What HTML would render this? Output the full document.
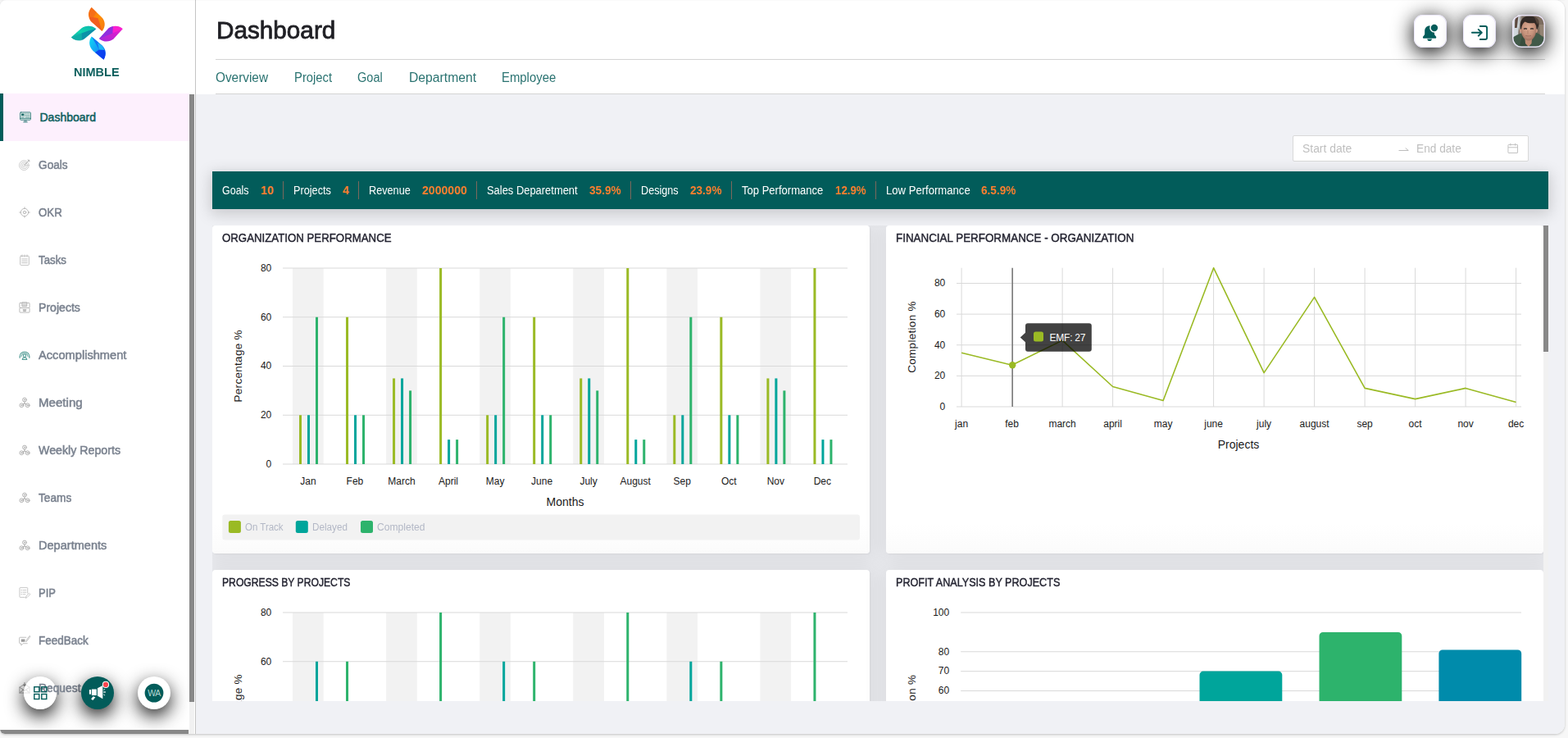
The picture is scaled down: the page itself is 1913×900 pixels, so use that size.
<!DOCTYPE html>
<html lang="en"><head><meta charset="utf-8"><title>Dashboard</title>
<style>
html,body{margin:0;padding:0}
body{width:1913px;height:900px;overflow:hidden;background:#f7f7f7;font-family:"Liberation Sans",sans-serif;position:relative}
.app{position:absolute;left:0;top:0;width:1909px;height:895px;border-radius:8px 12px 12px 6px;overflow:hidden;background:#f0f1f5;}
.frame{position:absolute;left:0;top:0;width:1909px;height:895px;border-radius:8px 12px 12px 6px;box-shadow:0 1px 3px rgba(0,0,0,.22);background:#fff}
.t{position:absolute;white-space:nowrap;line-height:20px;margin:0;padding:0;transform-origin:0 50%;text-decoration:none;display:block}
.abs{position:absolute}
.side{position:absolute;left:0;top:0;width:238px;height:895px;background:#fff;border-right:1px solid #c4c4c4}
.head{position:absolute;left:239px;top:0;width:1670px;height:115px;background:#fff}
.hl{position:absolute;left:24px;width:1622px;height:1px;background:#d4d4d4}
.ibtn{border:0;padding:0;margin:0;display:block;position:absolute;top:18px;width:40px;height:40px;border-radius:11px;background:#fff;box-shadow:0 5px 24px 1px rgba(0,0,0,.95),0 0 0 1px #ebe7fa inset;}
.fab{border:0;padding:0;margin:0;display:block;position:absolute;top:825px;width:40px;height:40px;border-radius:50%;box-shadow:0 8px 22px 0 rgba(0,0,0,.9);}
.stat{position:absolute;left:259px;top:209px;width:1630px;height:46px;background:#025c5a;box-shadow:0 4px 18px 2px rgba(0,0,0,.17)}
.sep{position:absolute;top:12px;width:1px;height:22px;background:#7c685c}
.date{position:absolute;left:1577px;top:165px;width:286px;height:30px;border:1px solid #d9d9d9;border-radius:2px;background:#fff}
.scroll{position:absolute;left:259px;top:275px;width:1630px;height:580px;overflow:hidden}
.card{position:absolute;width:802px;height:400px;background:#fff;border-radius:4px;box-shadow:1px 1px 2px rgba(0,0,0,.05),2px 2px 22px 9px rgba(0,0,0,.07)}
.card.r1{background:linear-gradient(to bottom,#fff 0,#fff 365px,#fbfbfb 400px)}
svg{position:absolute;overflow:visible}
svg text{font-family:"Liberation Sans",sans-serif}
</style></head>
<body>
<div class="frame"></div>
<div class="app">
  <header class="head">
    <div class="hl" style="top:72px"></div>
    <div class="hl" style="top:114px"></div>
  </header>
  <h1 class="t" style="left:264.30px;top:27px;font-size:29.5px;font-weight:400;color:#1f1f24;transform:scaleX(1.0067);-webkit-text-stroke:0.8px #1f1f24;">Dashboard</h1>
  <nav>
  <a class="t" style="left:262.80px;top:85px;font-size:16px;font-weight:400;color:#2a7371;transform:scaleX(0.9597);">Overview</a>
<a class="t" style="left:358.60px;top:85px;font-size:16px;font-weight:400;color:#2a7371;transform:scaleX(0.9258);">Project</a>
<a class="t" style="left:436.20px;top:85px;font-size:16px;font-weight:400;color:#2a7371;transform:scaleX(0.9084);">Goal</a>
<a class="t" style="left:498.70px;top:85px;font-size:16px;font-weight:400;color:#2a7371;transform:scaleX(0.9821);">Department</a>
<a class="t" style="left:611.80px;top:85px;font-size:16px;font-weight:400;color:#2a7371;transform:scaleX(0.9303);">Employee</a>
  </nav>
  <button class="ibtn" style="left:1725px"><svg width="40" height="40" viewBox="0 0 40 40" style="left:0;top:0">
<path d="M19.1 13.500c-3.500 0-5.900 2.600-5.900 6.100v3.300c0 1.200-.6 2.100-1.500 3.100-.6.700-1 1.200-.7 1.900.2.600.8.800 1.500.8h13.200c.7 0 1.300-.2 1.500-.8.300-.7-.1-1.200-.7-1.900-.9-1-1.500-1.900-1.500-3.100v-3.300c0-3.500-2.400-6.100-5.900-6.100z" fill="#025c5a"/>
<path d="M16.200 29.400h5.800c-.2 1.600-1.400 2.600-2.900 2.600s-2.700-1-2.900-2.600z" fill="#025c5a"/>
<circle cx="24.900" cy="16" r="5.700" fill="#fff"/>
<circle cx="24.900" cy="16" r="4.200" fill="#025c5a"/>
</svg></button>
  <button class="ibtn" style="left:1785px"><svg width="40" height="40" viewBox="0 0 40 40" style="left:0;top:0" fill="none" stroke="#025c5a" stroke-width="1.900" stroke-linejoin="round">
<path d="M10.900 21.800h11.600M18.700 17.900l4.100 3.900-4.100 3.900" stroke-linecap="round"/>
<path d="M20.100 14h7a2 2 0 0 1 2 2v12a2 2 0 0 1-2 2h-7"/>
</svg></button>
  <div class="ibtn" style="left:1845px;box-shadow:0 5px 24px 1px rgba(0,0,0,.95)"><svg width="40" height="40" viewBox="0 0 40 40" style="left:0;top:0">
<defs>
<linearGradient id="avbg" x1="0" y1="0" x2="1" y2="0"><stop offset="0" stop-color="#d9dfe4"/><stop offset="0.200" stop-color="#c9cfd4"/><stop offset="0.300" stop-color="#7d6f64"/><stop offset="0.750" stop-color="#756558"/><stop offset="1" stop-color="#8f7f71"/></linearGradient>
<radialGradient id="avface" cx="0.480" cy="0.400" r="0.650"><stop offset="0" stop-color="#dcaa92"/><stop offset="0.600" stop-color="#c4917a"/><stop offset="1" stop-color="#97695a"/></radialGradient>
<filter id="avb" x="-20%" y="-20%" width="140%" height="140%"><feGaussianBlur stdDeviation="0.500"/></filter>
<clipPath id="avc"><rect width="40" height="40" rx="11"/></clipPath>
</defs>
<g clip-path="url(#avc)">
<rect width="40" height="40" fill="url(#avbg)"/>
<g filter="url(#avb)">
<path d="M3.500 1h4l-1.800 15h-2.700z" fill="#5d4a40"/>
<path d="M8 14l2 12-3 2z" fill="#7a6a5e"/>
<path d="M30 4h12v26l-8-4z" fill="#7d6d60"/>
<path d="M33 12h7v14h-6z" fill="#938373"/>
<path d="M-2 42V29l8-4.500 6.500-2.500 4 9 3.500 6 4-6 4-9.500 4 1.500 9 6.500V42z" fill="#435a48"/>
<path d="M12.500 24l3 8 4.500 6.500-4 3.500H8z" fill="#384d3d"/>
<path d="M15.500 29h8.500l-.5 6-3.700 4-3.800-4z" fill="#c08d75"/>
<path d="M11 17.500c-1.500-.8-2.300 0-2 1.700.3 1.800 1.200 3 2.500 3zM29 17.500c1.500-.8 2.300 0 2 1.700-.3 1.800-1.200 3-2.500 3z" fill="#c99680"/>
<path d="M11 13c0-4.500 3.500-7 9-7s9 2.500 9 7v7c0 6-4.500 11.500-9 11.500S11 26 11 20z" fill="url(#avface)"/>
<path d="M9.800 17.500C8.500 8 12 1.500 20.500 1.500c8 0 13.500 4 11.500 12.500l-2 4.500c-.3-4-1.200-6.500-3-8.500-4 .8-8.500.3-11.500-1.500-2.500 2-4 4.500-4.500 9z" fill="#332925"/>
<path d="M27 3c3 .5 5.500 3 5.500 6l-2 3z" fill="#54443a"/>
<path d="M14 17.300c1.200-.6 2.800-.6 4 0M22 17.300c1.200-.6 2.800-.6 4 0" stroke="#3f3430" stroke-width="1.400" fill="none"/>
<path d="M19 19v4.500" stroke="#b88670" stroke-width="1.200"/>
<path d="M16.300 25.500c2.200.6 4.500.6 6.700 0" stroke="#9c6a5c" stroke-width="1" fill="none"/>
</g>
</g>
<rect x="0.750" y="0.750" width="38.500" height="38.500" rx="10.500" fill="none" stroke="#e9e4f6" stroke-width="1.500"/>
</svg></div>

  <div class="date"><svg width="14" height="10" viewBox="0 0 14 10" style="left:128px;top:10.500px" fill="none" stroke="#bdbdbd" stroke-width="1">
<path d="M0.500 6.500h11.800l-3.600-3"/></svg><svg width="13.500" height="13.500" viewBox="0 0 14 14" style="left:261.200px;top:7.800px" fill="none" stroke="#bfbfbf" stroke-width="1">
<rect x="1" y="2.500" width="12" height="10.500" rx="0.500"/><path d="M1 6h12M4 0.800v3M10 0.800v3"/></svg><span class="t" style="left:10.80px;top:5px;font-size:14px;font-weight:400;color:#bfbfbf;transform:scaleX(0.9934);">Start date</span>
<span class="t" style="left:150.00px;top:5px;font-size:14px;font-weight:400;color:#bfbfbf;transform:scaleX(0.9775);">End date</span></div>
  <section class="stat">
    <div class="sep" style="left:86px"></div><div class="sep" style="left:178px"></div><div class="sep" style="left:322px"></div><div class="sep" style="left:510px"></div><div class="sep" style="left:633px"></div><div class="sep" style="left:809px"></div>
    <span class="t" style="left:11.90px;top:13px;font-size:14px;font-weight:400;color:#ffffff;transform:scaleX(0.8912);">Goals</span>
<b class="t" style="left:59.10px;top:13px;font-size:14px;font-weight:700;color:#fb7f2e;">10</b>
<span class="t" style="left:98.60px;top:13px;font-size:14px;font-weight:400;color:#ffffff;transform:scaleX(0.9075);">Projects</span>
<b class="t" style="left:159.10px;top:13px;font-size:14px;font-weight:700;color:#fb7f2e;">4</b>
<span class="t" style="left:191.00px;top:13px;font-size:14px;font-weight:400;color:#ffffff;transform:scaleX(0.9064);">Revenue</span>
<b class="t" style="left:255.90px;top:13px;font-size:14px;font-weight:700;color:#fb7f2e;transform:scaleX(1.0071);">2000000</b>
<span class="t" style="left:335.10px;top:13px;font-size:14px;font-weight:400;color:#ffffff;transform:scaleX(0.9229);">Sales Deparetment</span>
<b class="t" style="left:459.50px;top:13px;font-size:14px;font-weight:700;color:#fb7f2e;transform:scaleX(0.9747);">35.9%</b>
<span class="t" style="left:522.80px;top:13px;font-size:14px;font-weight:400;color:#ffffff;transform:scaleX(0.9033);">Designs</span>
<b class="t" style="left:582.50px;top:13px;font-size:14px;font-weight:700;color:#fb7f2e;transform:scaleX(0.9697);">23.9%</b>
<span class="t" style="left:645.50px;top:13px;font-size:14px;font-weight:400;color:#ffffff;transform:scaleX(0.9314);">Top Performance</span>
<b class="t" style="left:759.80px;top:13px;font-size:14px;font-weight:700;color:#fb7f2e;transform:scaleX(0.9495);">12.9%</b>
<span class="t" style="left:821.70px;top:13px;font-size:14px;font-weight:400;color:#ffffff;transform:scaleX(0.9360);">Low Performance</span>
<b class="t" style="left:938.10px;top:13px;font-size:14px;font-weight:700;color:#fb7f2e;transform:scaleX(0.9703);">6.5.9%</b>
  </section>

  <main class="scroll">
    <section class="card r1" style="left:0;top:0"></section>
    <section class="card r1" style="left:822px;top:0"></section>
    <section class="card" style="left:0;top:420px"></section>
    <section class="card" style="left:822px;top:420px"></section>
    <svg width="1624" height="820" viewBox="0 0 1624 820" style="left:0;top:0">
<rect x="98.00" y="52" width="37.670" height="239" fill="#f2f2f2"/>
<rect x="212.08" y="52" width="37.670" height="239" fill="#f2f2f2"/>
<rect x="326.16" y="52" width="37.670" height="239" fill="#f2f2f2"/>
<rect x="440.24" y="52" width="37.670" height="239" fill="#f2f2f2"/>
<rect x="554.32" y="52" width="37.670" height="239" fill="#f2f2f2"/>
<rect x="668.40" y="52" width="37.670" height="239" fill="#f2f2f2"/>
<path d="M86 291.00H775" stroke="#d9d9d9" stroke-width="1" />
<text x="72.3" y="294.8" text-anchor="end" font-size="12" fill="#1a1a1a">0</text>
<path d="M86 231.25H775" stroke="#d9d9d9" stroke-width="1" />
<text x="72.3" y="235.1" text-anchor="end" font-size="12" fill="#1a1a1a">20</text>
<path d="M86 171.50H775" stroke="#d9d9d9" stroke-width="1" />
<text x="72.3" y="175.3" text-anchor="end" font-size="12" fill="#1a1a1a">40</text>
<path d="M86 111.75H775" stroke="#d9d9d9" stroke-width="1" />
<text x="72.3" y="115.5" text-anchor="end" font-size="12" fill="#1a1a1a">60</text>
<path d="M86 52.00H775" stroke="#d9d9d9" stroke-width="1" />
<text x="72.3" y="55.8" text-anchor="end" font-size="12" fill="#1a1a1a">80</text>
<rect x="106.00" y="231.25" width="3" height="59.75" fill="#9aba24"/>
<rect x="116.00" y="231.25" width="3" height="59.75" fill="#00a59b"/>
<rect x="126.00" y="111.75" width="3" height="179.25" fill="#2db36c"/>
<rect x="163.04" y="111.75" width="3" height="179.25" fill="#9aba24"/>
<rect x="173.04" y="231.25" width="3" height="59.75" fill="#00a59b"/>
<rect x="183.04" y="231.25" width="3" height="59.75" fill="#2db36c"/>
<rect x="220.08" y="186.44" width="3" height="104.56" fill="#9aba24"/>
<rect x="230.08" y="186.44" width="3" height="104.56" fill="#00a59b"/>
<rect x="240.08" y="201.38" width="3" height="89.62" fill="#2db36c"/>
<rect x="277.12" y="52.00" width="3" height="239.00" fill="#9aba24"/>
<rect x="287.12" y="261.12" width="3" height="29.88" fill="#00a59b"/>
<rect x="297.12" y="261.12" width="3" height="29.88" fill="#2db36c"/>
<rect x="334.16" y="231.25" width="3" height="59.75" fill="#9aba24"/>
<rect x="344.16" y="231.25" width="3" height="59.75" fill="#00a59b"/>
<rect x="354.16" y="111.75" width="3" height="179.25" fill="#2db36c"/>
<rect x="391.20" y="111.75" width="3" height="179.25" fill="#9aba24"/>
<rect x="401.20" y="231.25" width="3" height="59.75" fill="#00a59b"/>
<rect x="411.20" y="231.25" width="3" height="59.75" fill="#2db36c"/>
<rect x="448.24" y="186.44" width="3" height="104.56" fill="#9aba24"/>
<rect x="458.24" y="186.44" width="3" height="104.56" fill="#00a59b"/>
<rect x="468.24" y="201.38" width="3" height="89.62" fill="#2db36c"/>
<rect x="505.28" y="52.00" width="3" height="239.00" fill="#9aba24"/>
<rect x="515.28" y="261.12" width="3" height="29.88" fill="#00a59b"/>
<rect x="525.28" y="261.12" width="3" height="29.88" fill="#2db36c"/>
<rect x="562.32" y="231.25" width="3" height="59.75" fill="#9aba24"/>
<rect x="572.32" y="231.25" width="3" height="59.75" fill="#00a59b"/>
<rect x="582.32" y="111.75" width="3" height="179.25" fill="#2db36c"/>
<rect x="619.36" y="111.75" width="3" height="179.25" fill="#9aba24"/>
<rect x="629.36" y="231.25" width="3" height="59.75" fill="#00a59b"/>
<rect x="639.36" y="231.25" width="3" height="59.75" fill="#2db36c"/>
<rect x="676.40" y="186.44" width="3" height="104.56" fill="#9aba24"/>
<rect x="686.40" y="186.44" width="3" height="104.56" fill="#00a59b"/>
<rect x="696.40" y="201.38" width="3" height="89.62" fill="#2db36c"/>
<rect x="733.44" y="52.00" width="3" height="239.00" fill="#9aba24"/>
<rect x="743.44" y="261.12" width="3" height="29.88" fill="#00a59b"/>
<rect x="753.44" y="261.12" width="3" height="29.88" fill="#2db36c"/>
<text x="116.9" y="316.3" text-anchor="middle" font-size="12" fill="#1a1a1a">Jan</text>
<text x="173.9" y="316.3" text-anchor="middle" font-size="12" fill="#1a1a1a">Feb</text>
<text x="231" y="316.3" text-anchor="middle" font-size="12" fill="#1a1a1a">March</text>
<text x="288" y="316.3" text-anchor="middle" font-size="12" fill="#1a1a1a">April</text>
<text x="345.1" y="316.3" text-anchor="middle" font-size="12" fill="#1a1a1a">May</text>
<text x="402.1" y="316.3" text-anchor="middle" font-size="12" fill="#1a1a1a">June</text>
<text x="459.1" y="316.3" text-anchor="middle" font-size="12" fill="#1a1a1a">July</text>
<text x="516.2" y="316.3" text-anchor="middle" font-size="12" fill="#1a1a1a">August</text>
<text x="573.2" y="316.3" text-anchor="middle" font-size="12" fill="#1a1a1a">Sep</text>
<text x="630.3" y="316.3" text-anchor="middle" font-size="12" fill="#1a1a1a">Oct</text>
<text x="687.3" y="316.3" text-anchor="middle" font-size="12" fill="#1a1a1a">Nov</text>
<text x="744.3" y="316.3" text-anchor="middle" font-size="12" fill="#1a1a1a">Dec</text>
<text x="430.5" y="341.8" text-anchor="middle" font-size="14" fill="#1a1a1a">Months</text>
<text transform="translate(36.3 171.3) rotate(-90)" text-anchor="middle" font-size="13.500" letter-spacing="0.300" fill="#1a1a1a">Percentage %</text>
<rect x="12.3" y="352.5" width="777.700" height="31" rx="3" fill="#f2f2f2"/>
<rect x="19.9" y="360" width="15" height="15" rx="2.500" fill="#9aba24"/>
<rect x="101.8" y="360" width="15" height="15" rx="2.500" fill="#00a59b"/>
<rect x="181" y="360" width="15" height="15" rx="2.500" fill="#2db36c"/>
<path d="M908 221.00H1597" stroke="#d9d9d9" stroke-width="1"/>
<text x="894.3" y="224.8" text-anchor="end" font-size="12" fill="#1a1a1a">0</text>
<path d="M908 183.38H1597" stroke="#d9d9d9" stroke-width="1"/>
<text x="894.3" y="187.2" text-anchor="end" font-size="12" fill="#1a1a1a">20</text>
<path d="M908 145.76H1597" stroke="#d9d9d9" stroke-width="1"/>
<text x="894.3" y="149.6" text-anchor="end" font-size="12" fill="#1a1a1a">40</text>
<path d="M908 108.14H1597" stroke="#d9d9d9" stroke-width="1"/>
<text x="894.3" y="111.9" text-anchor="end" font-size="12" fill="#1a1a1a">60</text>
<path d="M908 70.52H1597" stroke="#d9d9d9" stroke-width="1"/>
<text x="894.3" y="74.3" text-anchor="end" font-size="12" fill="#1a1a1a">80</text>
<path d="M914.10 51.7V221" stroke="#d9d9d9" stroke-width="1"/>
<text x="914.1" y="246.2" text-anchor="middle" font-size="12" fill="#1a1a1a">jan</text>
<path d="M975.60 51.7V221" stroke="#d9d9d9" stroke-width="1"/>
<text x="975.6" y="246.2" text-anchor="middle" font-size="12" fill="#1a1a1a">feb</text>
<path d="M1037.10 51.7V221" stroke="#d9d9d9" stroke-width="1"/>
<text x="1037.1" y="246.2" text-anchor="middle" font-size="12" fill="#1a1a1a">march</text>
<path d="M1098.60 51.7V221" stroke="#d9d9d9" stroke-width="1"/>
<text x="1098.6" y="246.2" text-anchor="middle" font-size="12" fill="#1a1a1a">april</text>
<path d="M1160.10 51.7V221" stroke="#d9d9d9" stroke-width="1"/>
<text x="1160.1" y="246.2" text-anchor="middle" font-size="12" fill="#1a1a1a">may</text>
<path d="M1221.60 51.7V221" stroke="#d9d9d9" stroke-width="1"/>
<text x="1221.6" y="246.2" text-anchor="middle" font-size="12" fill="#1a1a1a">june</text>
<path d="M1283.10 51.7V221" stroke="#d9d9d9" stroke-width="1"/>
<text x="1283.1" y="246.2" text-anchor="middle" font-size="12" fill="#1a1a1a">july</text>
<path d="M1344.60 51.7V221" stroke="#d9d9d9" stroke-width="1"/>
<text x="1344.6" y="246.2" text-anchor="middle" font-size="12" fill="#1a1a1a">august</text>
<path d="M1406.10 51.7V221" stroke="#d9d9d9" stroke-width="1"/>
<text x="1406.1" y="246.2" text-anchor="middle" font-size="12" fill="#1a1a1a">sep</text>
<path d="M1467.60 51.7V221" stroke="#d9d9d9" stroke-width="1"/>
<text x="1467.6" y="246.2" text-anchor="middle" font-size="12" fill="#1a1a1a">oct</text>
<path d="M1529.10 51.7V221" stroke="#d9d9d9" stroke-width="1"/>
<text x="1529.1" y="246.2" text-anchor="middle" font-size="12" fill="#1a1a1a">nov</text>
<path d="M1590.60 51.7V221" stroke="#d9d9d9" stroke-width="1"/>
<text x="1590.6" y="246.2" text-anchor="middle" font-size="12" fill="#1a1a1a">dec</text>
<path d="M976.2 51.7V221" stroke="#666" stroke-width="1.300"/>
<polyline points="914.1,155.2 975.6,170.2 1037.1,140.1 1098.6,196.5 1160.1,213.5 1221.6,51.7 1283.1,179.6 1344.6,87.4 1406.1,198.4 1467.6,211.6 1529.1,198.4 1590.6,215.4" fill="none" stroke="#9aba24" stroke-width="1.600" stroke-linejoin="round"/>
<circle cx="976.2" cy="170.2" r="4.200" fill="#9aba24"/>
<text x="1252" y="272.2" text-anchor="middle" font-size="14" fill="#1a1a1a">Projects</text>
<text transform="translate(858.4 136) rotate(-90)" text-anchor="middle" font-size="13.500" letter-spacing="0.300" fill="#1a1a1a">Completion %</text>
<path d="M995 119.2H1069.8a3 3 0 0 1 3 3V150.7a3 3 0 0 1-3 3H995a3 3 0 0 1-3-3V142.2l-6.300-5.700 6.300-5.700V122.2a3 3 0 0 1 3-3z" fill="#000" fill-opacity="0.740"/>
<rect x="1002" y="129.4" width="12" height="12" rx="2.500" fill="#9aba24"/>
<text x="1021.6" y="140.7" font-size="12" fill="#fff" letter-spacing="-0.250">EMF: 27</text>
<rect x="98.00" y="472" width="37.670" height="239" fill="#f2f2f2"/>
<rect x="212.08" y="472" width="37.670" height="239" fill="#f2f2f2"/>
<rect x="326.16" y="472" width="37.670" height="239" fill="#f2f2f2"/>
<rect x="440.24" y="472" width="37.670" height="239" fill="#f2f2f2"/>
<rect x="554.32" y="472" width="37.670" height="239" fill="#f2f2f2"/>
<rect x="668.40" y="472" width="37.670" height="239" fill="#f2f2f2"/>
<path d="M86 711.00H775" stroke="#d9d9d9" stroke-width="1" />
<path d="M86 651.25H775" stroke="#d9d9d9" stroke-width="1" />
<path d="M86 591.50H775" stroke="#d9d9d9" stroke-width="1" />
<path d="M86 531.75H775" stroke="#d9d9d9" stroke-width="1" />
<text x="72.3" y="535.5" text-anchor="end" font-size="12" fill="#1a1a1a">60</text>
<path d="M86 472.00H775" stroke="#d9d9d9" stroke-width="1" />
<text x="72.3" y="475.8" text-anchor="end" font-size="12" fill="#1a1a1a">80</text>
<rect x="106.00" y="651.25" width="3" height="59.75" fill="#2db36c"/>
<rect x="116.00" y="651.25" width="3" height="59.75" fill="#9aba24"/>
<rect x="126.00" y="531.75" width="3" height="179.25" fill="#00a59b"/>
<rect x="163.04" y="531.75" width="3" height="179.25" fill="#2db36c"/>
<rect x="173.04" y="651.25" width="3" height="59.75" fill="#9aba24"/>
<rect x="183.04" y="651.25" width="3" height="59.75" fill="#00a59b"/>
<rect x="220.08" y="606.44" width="3" height="104.56" fill="#2db36c"/>
<rect x="230.08" y="606.44" width="3" height="104.56" fill="#9aba24"/>
<rect x="240.08" y="621.38" width="3" height="89.62" fill="#00a59b"/>
<rect x="277.12" y="472.00" width="3" height="239.00" fill="#2db36c"/>
<rect x="287.12" y="681.12" width="3" height="29.88" fill="#9aba24"/>
<rect x="297.12" y="681.12" width="3" height="29.88" fill="#00a59b"/>
<rect x="334.16" y="651.25" width="3" height="59.75" fill="#2db36c"/>
<rect x="344.16" y="651.25" width="3" height="59.75" fill="#9aba24"/>
<rect x="354.16" y="531.75" width="3" height="179.25" fill="#00a59b"/>
<rect x="391.20" y="531.75" width="3" height="179.25" fill="#2db36c"/>
<rect x="401.20" y="651.25" width="3" height="59.75" fill="#9aba24"/>
<rect x="411.20" y="651.25" width="3" height="59.75" fill="#00a59b"/>
<rect x="448.24" y="606.44" width="3" height="104.56" fill="#2db36c"/>
<rect x="458.24" y="606.44" width="3" height="104.56" fill="#9aba24"/>
<rect x="468.24" y="621.38" width="3" height="89.62" fill="#00a59b"/>
<rect x="505.28" y="472.00" width="3" height="239.00" fill="#2db36c"/>
<rect x="515.28" y="681.12" width="3" height="29.88" fill="#9aba24"/>
<rect x="525.28" y="681.12" width="3" height="29.88" fill="#00a59b"/>
<rect x="562.32" y="651.25" width="3" height="59.75" fill="#2db36c"/>
<rect x="572.32" y="651.25" width="3" height="59.75" fill="#9aba24"/>
<rect x="582.32" y="531.75" width="3" height="179.25" fill="#00a59b"/>
<rect x="619.36" y="531.75" width="3" height="179.25" fill="#2db36c"/>
<rect x="629.36" y="651.25" width="3" height="59.75" fill="#9aba24"/>
<rect x="639.36" y="651.25" width="3" height="59.75" fill="#00a59b"/>
<rect x="676.40" y="606.44" width="3" height="104.56" fill="#2db36c"/>
<rect x="686.40" y="606.44" width="3" height="104.56" fill="#9aba24"/>
<rect x="696.40" y="621.38" width="3" height="89.62" fill="#00a59b"/>
<rect x="733.44" y="472.00" width="3" height="239.00" fill="#2db36c"/>
<rect x="743.44" y="681.12" width="3" height="29.88" fill="#9aba24"/>
<rect x="753.44" y="681.12" width="3" height="29.88" fill="#00a59b"/>
<text transform="translate(36.3 591.3) rotate(-90)" text-anchor="middle" font-size="13.500" letter-spacing="0.300" fill="#1a1a1a">Percentage %</text>
<path d="M913.2 472.00H1597" stroke="#d9d9d9" stroke-width="1"/>
<text x="899.2" y="475.8" text-anchor="end" font-size="12" fill="#1a1a1a">100</text>
<path d="M913.2 519.74H1597" stroke="#d9d9d9" stroke-width="1"/>
<text x="899.2" y="523.5" text-anchor="end" font-size="12" fill="#1a1a1a">80</text>
<path d="M913.2 543.61H1597" stroke="#d9d9d9" stroke-width="1"/>
<text x="899.2" y="547.4" text-anchor="end" font-size="12" fill="#1a1a1a">70</text>
<path d="M913.2 567.48H1597" stroke="#d9d9d9" stroke-width="1"/>
<text x="899.2" y="571.3" text-anchor="end" font-size="12" fill="#1a1a1a">60</text>
<path d="M913.2 591.35H1597" stroke="#d9d9d9" stroke-width="1"/>
<path d="M913.2 615.22H1597" stroke="#d9d9d9" stroke-width="1"/>
<path d="M913.2 639.09H1597" stroke="#d9d9d9" stroke-width="1"/>
<path d="M913.2 662.96H1597" stroke="#d9d9d9" stroke-width="1"/>
<path d="M913.2 686.83H1597" stroke="#d9d9d9" stroke-width="1"/>
<path d="M913.2 710.70H1597" stroke="#d9d9d9" stroke-width="1"/>
<path d="M913.3 710.7V643.6a4.5 4.5 0 0 1 4.5-4.5H1009.6a4.5 4.5 0 0 1 4.5 4.5V710.7z" fill="#9aba24"/>
<path d="M1059 710.7V607.8a4.5 4.5 0 0 1 4.5-4.5H1155.3a4.5 4.5 0 0 1 4.5 4.5V710.7z" fill="#9aba24"/>
<path d="M1204.5 710.7V548.1a4.5 4.5 0 0 1 4.5-4.5H1300.8a4.5 4.5 0 0 1 4.5 4.5V710.7z" fill="#00a59b"/>
<path d="M1350.5 710.7V500.4a4.5 4.5 0 0 1 4.5-4.5H1446.8a4.5 4.5 0 0 1 4.5 4.5V710.7z" fill="#2db36c"/>
<path d="M1496.4 710.7V521.9a4.5 4.5 0 0 1 4.5-4.5H1592.7a4.5 4.5 0 0 1 4.5 4.5V710.7z" fill="#008bab"/>
<text transform="translate(858.4 591.5) rotate(-90)" text-anchor="middle" font-size="13.500" letter-spacing="0.300" fill="#1a1a1a">Completion %</text>
</svg>
    <h3 class="t" style="left:11.60px;top:5px;font-size:14px;font-weight:400;color:#262633;transform:scaleX(0.9463);-webkit-text-stroke:0.45px #262633;">ORGANIZATION PERFORMANCE</h3>
<h3 class="t" style="left:834.20px;top:5px;font-size:14px;font-weight:400;color:#262633;transform:scaleX(0.9570);-webkit-text-stroke:0.45px #262633;">FINANCIAL PERFORMANCE - ORGANIZATION</h3>
<h3 class="t" style="left:11.60px;top:425px;font-size:14px;font-weight:400;color:#262633;transform:scaleX(0.8678);-webkit-text-stroke:0.45px #262633;">PROGRESS BY PROJECTS</h3>
<h3 class="t" style="left:834.20px;top:425px;font-size:14px;font-weight:400;color:#262633;transform:scaleX(0.9002);-webkit-text-stroke:0.45px #262633;">PROFIT ANALYSIS BY PROJECTS</h3>
<span class="t" style="left:39.80px;top:358px;font-size:12px;font-weight:400;color:#b3b8c6;transform:scaleX(0.9571);">On Track</span>
<span class="t" style="left:122.20px;top:358px;font-size:12px;font-weight:400;color:#b3b8c6;transform:scaleX(0.9743);">Delayed</span>
<span class="t" style="left:201.00px;top:358px;font-size:12px;font-weight:400;color:#b3b8c6;transform:scaleX(1.0081);">Completed</span>
    <div class="abs" style="left:1624px;top:0;width:6px;height:580px;background:#f1f1f1"></div>
    <div class="abs" style="left:1624px;top:0;width:6px;height:154px;background:#888"></div>
  </main>

  <aside class="side">
    <svg width="238" height="110" viewBox="0 0 238 110" style="left:0;top:0">
<defs>
<linearGradient id="lgO" x1="0" y1="0" x2="1" y2="1"><stop offset="0" stop-color="#f86a12"/><stop offset="0.500" stop-color="#fe8f06"/><stop offset="1" stop-color="#f57a14"/></linearGradient>
<linearGradient id="lgT" x1="0" y1="1" x2="1" y2="0"><stop offset="0" stop-color="#14b5a8"/><stop offset="0.450" stop-color="#10c9ad"/><stop offset="1" stop-color="#0b90a6"/></linearGradient>
<linearGradient id="lgP" x1="0" y1="1" x2="1" y2="0"><stop offset="0" stop-color="#a12ad8"/><stop offset="0.550" stop-color="#cf20cf"/><stop offset="1" stop-color="#f51fca"/></linearGradient>
<linearGradient id="lgB" x1="0" y1="0" x2="1" y2="1"><stop offset="0" stop-color="#10dcf3"/><stop offset="0.550" stop-color="#149af5"/><stop offset="1" stop-color="#0a43f0"/></linearGradient>
</defs>
<path d="M111.700 8.900C106.700 14 106.800 21 111.500 26.500L124.600 38C129.300 32 128.500 25.500 123.800 20.800Z" fill="url(#lgO)"/>
<path d="M109 20.500L119.500 22 124.600 38 111.500 26.500C110 24.800 109.300 22.800 109 20.500Z" fill="#ee5722" opacity=".85"/>
<path d="M111.700 8.900L117.500 14.800 114 21.200 109 20.500C108.300 16 109.300 12 111.700 8.900Z" fill="#f4691c" opacity=".7"/>
<path d="M86.800 45.500C92 50.300 99.500 50 104.500 46L117.300 35.200C112 30.700 104.500 30.700 99.500 34.500Z" fill="url(#lgT)"/>
<path d="M86.800 45.500L99.500 40.500 100 49C95 50.500 90.500 49 86.800 45.500Z" fill="#10a9a6" opacity=".8"/>
<path d="M99.500 34.500C104.500 30.700 112 30.700 117.300 35.200L108 37.500 99.500 40.500 93 40Z" fill="#0fe3b3" opacity=".45"/>
<path d="M100 49L99.500 40.500 108 37.500 117.300 35.200 104.500 46C103 47.500 101.500 48.500 100 49Z" fill="#0b86a8" opacity=".8"/>
<path d="M149.700 35.200C144.500 30.500 137.500 30.700 132.500 34.500L120.900 47.200C126.500 51.700 133.500 51.500 138.500 47.500Z" fill="url(#lgP)"/>
<path d="M132.500 34.500C134 33.300 136 32.500 138 32.200L137.500 40.500 120.900 47.200Z" fill="#8630e0" opacity=".85"/>
<path d="M138 32.200C142 31.500 146.500 32.500 149.700 35.200L137.500 40.500Z" fill="#ff1fd0" opacity=".8"/>
<path d="M111.700 44.500C107.700 50.500 108.500 57 113.500 62L126.500 72.800C130.300 66.500 129.500 60.500 124.800 55.800Z" fill="url(#lgB)"/>
<path d="M111.700 44.500L121 60.500 127.500 61 124.800 55.800Z" fill="#1468f2" opacity=".85"/>
<path d="M121 60.500L127.500 61C128.800 65 128.500 69 126.500 72.800L116 64Z" fill="#0a38ee" opacity=".85"/>
<path d="M121 60.500L127.500 61 124.800 55.800 119 52Z" fill="#22e4f5" opacity=".6"/>
</svg>
    <div class="t" style="left:90.40px;top:78px;font-size:14.6px;font-weight:700;color:#0d5f5d;transform:scaleX(0.9937);">NIMBLE</div>
    <div class="abs" style="left:0;top:114px;width:231px;height:58px;background:#fdf0fd"></div>
    <div class="abs" style="left:0;top:114px;width:4px;height:58px;background:#025c5a"></div>
    <svg width="14" height="14" viewBox="0 0 15 15" style="left:24px;top:136px" fill="none" stroke="#2f7b78" stroke-width="1" stroke-linecap="round" stroke-linejoin="round"><rect x="0.700" y="1" width="13.600" height="10" rx="0.800" fill="#eaf2f1"/><path d="M0.700 9h13.600" stroke-width="0.900"/><path d="M5 13.800h5M6.500 11.200v2.400M8.500 11.200v2.400" stroke-width="0.900"/><path d="M2.200 2.600h3.600v2.700h-3.600z" fill="#1f6e6b" stroke="none"/><path d="M6.800 3h2.200M10 3h2.800M6.800 4.800h6M2.200 6.500h4M7.500 6.500h5.300M2.200 7.700h3M8 7.700h4.800" stroke-width="0.700" stroke="#5d9a96"/></svg>
<svg width="14" height="14" viewBox="0 0 15 15" style="left:23px;top:194px" fill="none" stroke="#c4c4c4" stroke-width="0.9" stroke-linecap="round" stroke-linejoin="round"><circle cx="6.800" cy="8.200" r="6.300"/><circle cx="6.800" cy="8.200" r="4.200"/><circle cx="6.800" cy="8.200" r="2.100"/><path d="M6.800 8.200l6.300-6.300M11.800 1.200l1.800.2.200 1.800" stroke="#a5a5a5"/></svg>
<svg width="14" height="14" viewBox="0 0 15 15" style="left:23px;top:252px" fill="none" stroke="#b5b5b5" stroke-width="1" stroke-linecap="round" stroke-linejoin="round"><circle cx="7.500" cy="7.500" r="5"/><circle cx="7.500" cy="7.500" r="1.900"/><path d="M7.500 0.800v2M7.500 12.200v2M0.800 7.500h2M12.200 7.500h2"/></svg>
<svg width="14" height="14" viewBox="0 0 15 15" style="left:23px;top:310px" fill="none" stroke="#bdbdbd" stroke-width="1" stroke-linecap="round" stroke-linejoin="round"><rect x="1.800" y="2.300" width="11.400" height="12" rx="1"/><path d="M4.300 1v2.400M7.500 1v2.400M10.700 1v2.400M4 6.300h7M4 8.800h7M4 11.300h7"/></svg>
<svg width="14" height="14" viewBox="0 0 15 15" style="left:23px;top:368px" fill="none" stroke="#b5b5b5" stroke-width="1" stroke-linecap="round" stroke-linejoin="round"><rect x="1" y="1.500" width="13" height="6.500" rx="0.800"/><rect x="1" y="8" width="13" height="6" rx="0.800"/><rect x="4.500" y="0.800" width="6" height="5" fill="#d9d9d9"/><path d="M5.500 10.500h4M6 12h3" stroke="#8a8a8a"/></svg>
<svg width="14" height="14" viewBox="0 0 15 15" style="left:23px;top:426px" fill="none" stroke="#4f9a93" stroke-width="1.1" stroke-linecap="round" stroke-linejoin="round"><path d="M1.200 9.500a6.300 6.300 0 0 1 12.600 0"/><path d="M3.300 9.300a4.200 4.200 0 0 1 8.400 0" stroke-dasharray="1.500 1"/><circle cx="7.500" cy="8.300" r="1.800"/><path d="M4.500 13.500c.3-2 1.500-2.800 3-2.800s2.700.8 3 2.800z"/><path d="M1.200 9.500v1.800M13.800 9.500v1.800"/></svg>
<svg width="14" height="14" viewBox="0 0 15 15" style="left:23px;top:484px" fill="none" stroke="#acacac" stroke-width="1" stroke-linecap="round" stroke-linejoin="round"><circle cx="7.500" cy="3.800" r="2.600"/><circle cx="3.600" cy="11" r="2.600"/><circle cx="11.400" cy="11" r="2.600"/><path d="M7.500 6.400v2.200M7.500 8.600l-2.200 1M7.500 8.600l2.200 1"/><circle cx="7.500" cy="3.800" r="0.700"/><circle cx="3.600" cy="11" r="0.700"/><circle cx="11.400" cy="11" r="0.700"/></svg>
<svg width="14" height="14" viewBox="0 0 15 15" style="left:23px;top:542px" fill="none" stroke="#acacac" stroke-width="1" stroke-linecap="round" stroke-linejoin="round"><circle cx="7.500" cy="3.800" r="2.600"/><circle cx="3.600" cy="11" r="2.600"/><circle cx="11.400" cy="11" r="2.600"/><path d="M7.500 6.400v2.200M7.500 8.600l-2.200 1M7.500 8.600l2.200 1"/><circle cx="7.500" cy="3.800" r="0.700"/><circle cx="3.600" cy="11" r="0.700"/><circle cx="11.400" cy="11" r="0.700"/></svg>
<svg width="14" height="14" viewBox="0 0 15 15" style="left:23px;top:600px" fill="none" stroke="#acacac" stroke-width="1" stroke-linecap="round" stroke-linejoin="round"><circle cx="7.500" cy="3.800" r="2.600"/><circle cx="3.600" cy="11" r="2.600"/><circle cx="11.400" cy="11" r="2.600"/><path d="M7.500 6.400v2.200M7.500 8.600l-2.200 1M7.500 8.600l2.200 1"/><circle cx="7.500" cy="3.800" r="0.700"/><circle cx="3.600" cy="11" r="0.700"/><circle cx="11.400" cy="11" r="0.700"/></svg>
<svg width="14" height="14" viewBox="0 0 15 15" style="left:23px;top:658px" fill="none" stroke="#acacac" stroke-width="1" stroke-linecap="round" stroke-linejoin="round"><circle cx="7.500" cy="3.800" r="2.600"/><circle cx="3.600" cy="11" r="2.600"/><circle cx="11.400" cy="11" r="2.600"/><path d="M7.500 6.400v2.200M7.500 8.600l-2.200 1M7.500 8.600l2.200 1"/><circle cx="7.500" cy="3.800" r="0.700"/><circle cx="3.600" cy="11" r="0.700"/><circle cx="11.400" cy="11" r="0.700"/></svg>
<svg width="14" height="14" viewBox="0 0 15 15" style="left:23px;top:716px" fill="none" stroke="#bdbdbd" stroke-width="0.9" stroke-linecap="round" stroke-linejoin="round"><path d="M11.500 8V1.500a.8.800 0 0 0-.8-.8H1.800a.8.800 0 0 0-.8.800v11a.8.800 0 0 0 .8.800h6"/><path d="M3 4h1M5.500 4h4M3 6.700h1M5.500 6.700h4M3 9.400h1M5.500 9.400h3"/><path d="M9 14l.6-2.200 3.800-3.800 1.400 1.400-3.800 3.800z"/></svg>
<svg width="14" height="14" viewBox="0 0 15 15" style="left:23px;top:774px" fill="none" stroke="#b5b5b5" stroke-width="0.9" stroke-linecap="round" stroke-linejoin="round"><path d="M11 11.500H5.500l-2.500 2.500v-2.500H1.500a.8.800 0 0 1-.8-.8V4.300a.8.800 0 0 1 .8-.8h8"/><path d="M3 6h5v3.500h-5z" fill="#9a9a9a" stroke="none"/><path d="M9.500 9l.5-2.200 4-5.300 1 .8-4 5.300z"/></svg>
<svg width="14" height="14" viewBox="0 0 15 15" style="left:23px;top:832px" fill="none" stroke="#a9a9a9" stroke-width="1.1" stroke-linecap="round" stroke-linejoin="round"><path d="M1 6.500l6.500-4 6.500 4v7.500h-13z"/><path d="M1 6.500l6.500 4.500 6.500-4.500M1 14l4.500-4M14 14l-4.500-4"/><path d="M7.500 0.500v4.500M5.800 3.300l1.700 1.700 1.700-1.700" stroke="#8f8f8f"/></svg>
    <div class="fab" style="left:29px;background:rgba(255,255,255,.68)"></div>
    <nav>
    <a class="t" style="left:48.50px;top:133px;font-size:14px;font-weight:400;color:#0d5f5d;-webkit-text-stroke:0.5px #0d5f5d;">Dashboard</a>
<a class="t" style="left:47.10px;top:191px;font-size:14px;font-weight:400;color:#7a828f;transform:scaleX(0.9760);-webkit-text-stroke:0.5px #7a828f;">Goals</a>
<a class="t" style="left:47.10px;top:249px;font-size:14px;font-weight:400;color:#7a828f;transform:scaleX(0.9458);-webkit-text-stroke:0.5px #7a828f;">OKR</a>
<a class="t" style="left:46.90px;top:307px;font-size:14px;font-weight:400;color:#7a828f;transform:scaleX(0.9470);-webkit-text-stroke:0.5px #7a828f;">Tasks</a>
<a class="t" style="left:47.10px;top:365px;font-size:14px;font-weight:400;color:#7a828f;transform:scaleX(1.0064);-webkit-text-stroke:0.5px #7a828f;">Projects</a>
<a class="t" style="left:47.10px;top:423px;font-size:14px;font-weight:400;color:#7a828f;transform:scaleX(1.0457);-webkit-text-stroke:0.5px #7a828f;">Accomplishment</a>
<a class="t" style="left:47.10px;top:481px;font-size:14px;font-weight:400;color:#7a828f;transform:scaleX(1.0780);-webkit-text-stroke:0.5px #7a828f;">Meeting</a>
<a class="t" style="left:47.10px;top:539px;font-size:14px;font-weight:400;color:#7a828f;transform:scaleX(1.0146);-webkit-text-stroke:0.5px #7a828f;">Weekly Reports</a>
<a class="t" style="left:46.90px;top:597px;font-size:14px;font-weight:400;color:#7a828f;transform:scaleX(0.9749);-webkit-text-stroke:0.5px #7a828f;">Teams</a>
<a class="t" style="left:47.10px;top:655px;font-size:14px;font-weight:400;color:#7a828f;transform:scaleX(1.0405);-webkit-text-stroke:0.5px #7a828f;">Departments</a>
<a class="t" style="left:47.10px;top:713px;font-size:14px;font-weight:400;color:#7a828f;transform:scaleX(0.9257);-webkit-text-stroke:0.5px #7a828f;">PIP</a>
<a class="t" style="left:47.10px;top:771px;font-size:14px;font-weight:400;color:#7a828f;transform:scaleX(0.9628);-webkit-text-stroke:0.5px #7a828f;">FeedBack</a>
<a class="t" style="left:47.10px;top:829px;font-size:14px;font-weight:400;color:#7a828f;transform:scaleX(0.9874);-webkit-text-stroke:0.5px #7a828f;">Request</a>
    </nav>
    <button class="fab" style="left:29px;background:none;box-shadow:none"><svg width="40" height="40" viewBox="0 0 40 40" style="left:0;top:0" fill="none" stroke="#025c5a" stroke-width="1.400">
<rect x="12.800" y="12.700" width="6" height="6"/><rect x="21.800" y="12.700" width="6" height="6"/>
<rect x="12.800" y="21.500" width="6" height="6"/><rect x="21.800" y="21.500" width="6" height="6"/>
</svg></button>
    <button class="fab" style="left:99px;background:#025c5a"><svg width="40" height="40" viewBox="0 0 40 40" style="left:0;top:0">
<g fill="#fff">
<rect x="9.900" y="16.100" width="2.200" height="5.600" rx="0.600"/>
<path d="M12.900 15.400h5.900v7.600h-5.900z" />
<path d="M19.900 14.200l6.400-3.100v16.100l-6.400-3.600z"/>
<path d="M14.600 24.200l2.800 1.100-3.100 3.600-2.200-1.400z"/>
<path d="M27.100 18.300h2.800v1.400h-2.800z" opacity=".8"/>
<path d="M27 16.100l1.700-1.200.6.800-1.700 1.200z" opacity=".8"/>
<path d="M27 21.900l1.700 1.700.7-.7-1.700-1.700z" opacity=".8"/>
</g>
<circle cx="30" cy="9.900" r="4.100" fill="#fff"/>
<circle cx="30" cy="9.900" r="3.100" fill="#fb4650"/>
</svg></button>
    <button class="fab" style="left:168px;background:#fff"><svg width="40" height="40" viewBox="0 0 40 40" style="left:0;top:0">
<circle cx="20" cy="20.100" r="11.400" fill="#025c5a"/>
<text x="20" y="24" text-anchor="middle" font-size="10.500" font-weight="400" fill="#b5d7d3" letter-spacing="-0.600">WA</text>
</svg></button>
    <div class="abs" style="left:231px;top:115px;width:6px;height:775px;background:#f1f1f1"></div>
    <div class="abs" style="left:231px;top:115px;width:6px;height:741px;background:#888"></div>
    <div class="abs" style="left:0;top:890px;width:237px;height:6px;background:#f1f1f1"></div>
    <div class="abs" style="left:0;top:890px;width:230px;height:6px;background:#888"></div>
  </aside>
</div>
<div class="abs" style="left:0;top:0;width:1909px;height:1px;background:rgba(0,0,0,.02)"></div>
</body></html>
